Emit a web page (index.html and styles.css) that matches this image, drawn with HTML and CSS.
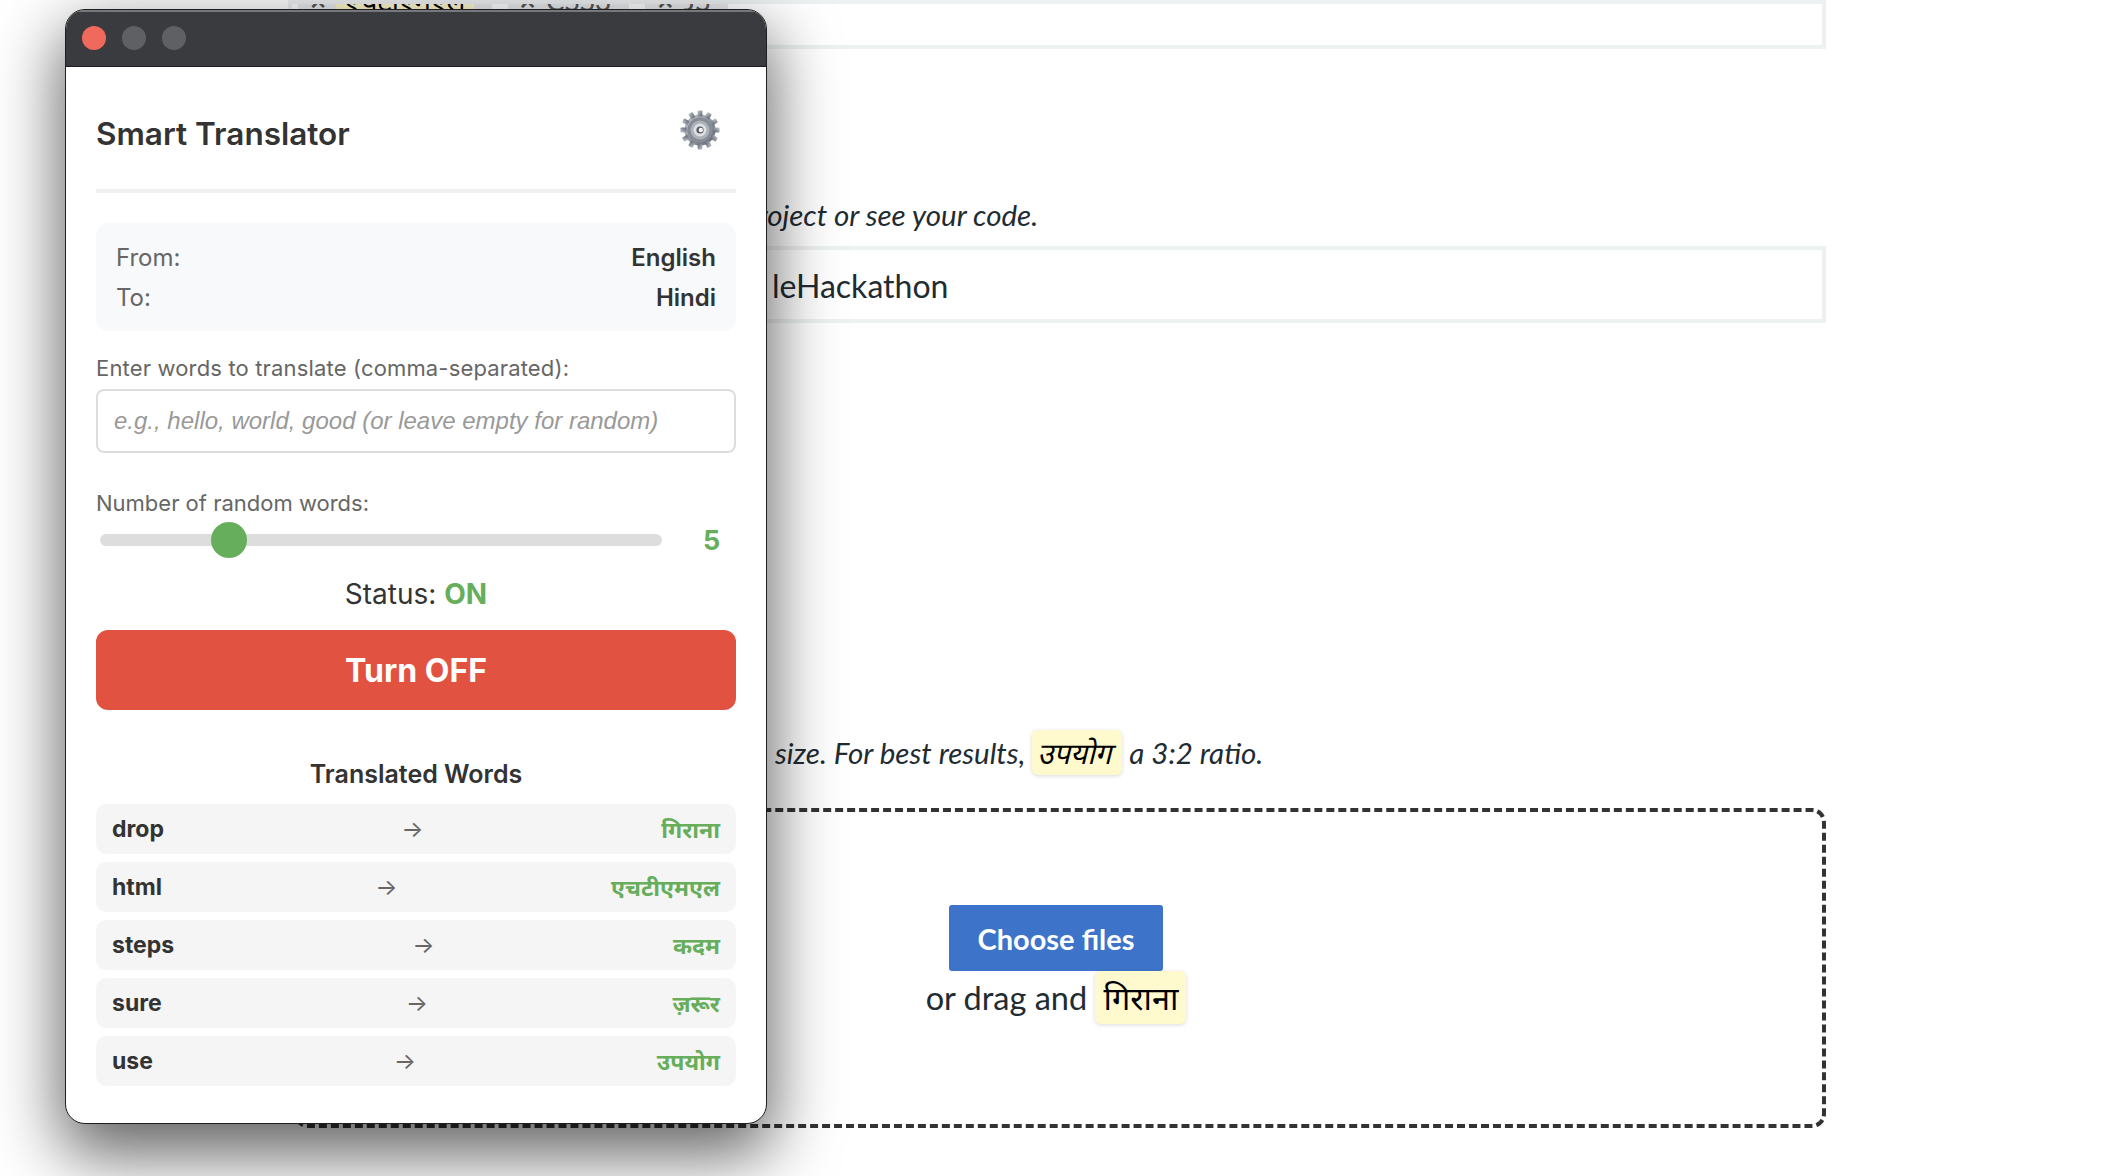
FILE: index.html
```html
<!DOCTYPE html>
<html lang="en">
<head>
	<meta charset="UTF-8">
	<link rel="stylesheet" href="styles.css">
	<title>Smart Translator</title>
</head>
<body>
<div class="page">
	<div class="box tagBox">
		<span class="tag"><i>×</i><mark class="hl">एचटीएमएल</mark></span>
		<span class="tag"><i>×</i>CSS3</span>
		<span class="tag"><i>×</i>JS</span>
	</div>
	<p class="hint linkHint">project or see your code.</p>
	<div class="box linkBox">leHackathon</div>
	<p class="hint sizeHint">size. For best results, <mark class="hl"><span class="slant">उपयोग</span></mark> a 3:2 ratio.</p>
	<div class="drop">
		<button class="choose">Choose files</button>
		<div class="dragText">or drag and <mark class="hl">गिराना</mark></div>
	</div>
</div>

<div class="win">
	<div class="titlebar">
		<span class="dot red"></span>
		<span class="dot"></span>
		<span class="dot"></span>
	</div>
	<div class="content">
		<div class="head">
			<h1>Smart Translator</h1>
			<svg class="gear" width="44" height="44" viewBox="0 0 44 44">
				<defs>
					<linearGradient id="steel" x1="0" y1="0" x2="1" y2="1">
						<stop offset="0" stop-color="#c3c8cf"/>
						<stop offset="0.55" stop-color="#8b919b"/>
						<stop offset="1" stop-color="#5f646d"/>
					</linearGradient>
				</defs>
				<g fill="url(#steel)">
					<circle cx="22" cy="22" r="15.5"/>
					<rect x="19.6" y="2.5" width="4.8" height="6" rx="1" transform="rotate(0 22 22)"/>
					<rect x="19.6" y="2.5" width="4.8" height="6" rx="1" transform="rotate(30 22 22)"/>
					<rect x="19.6" y="2.5" width="4.8" height="6" rx="1" transform="rotate(60 22 22)"/>
					<rect x="19.6" y="2.5" width="4.8" height="6" rx="1" transform="rotate(90 22 22)"/>
					<rect x="19.6" y="2.5" width="4.8" height="6" rx="1" transform="rotate(120 22 22)"/>
					<rect x="19.6" y="2.5" width="4.8" height="6" rx="1" transform="rotate(150 22 22)"/>
					<rect x="19.6" y="2.5" width="4.8" height="6" rx="1" transform="rotate(180 22 22)"/>
					<rect x="19.6" y="2.5" width="4.8" height="6" rx="1" transform="rotate(210 22 22)"/>
					<rect x="19.6" y="2.5" width="4.8" height="6" rx="1" transform="rotate(240 22 22)"/>
					<rect x="19.6" y="2.5" width="4.8" height="6" rx="1" transform="rotate(270 22 22)"/>
					<rect x="19.6" y="2.5" width="4.8" height="6" rx="1" transform="rotate(300 22 22)"/>
					<rect x="19.6" y="2.5" width="4.8" height="6" rx="1" transform="rotate(330 22 22)"/>
				</g>
				<circle cx="22" cy="22" r="12.5" fill="#868b95"/>
				<circle cx="22" cy="22" r="9.5" fill="#adb2b9"/>
				<circle cx="22" cy="22" r="6.5" fill="#dcdfe3"/>
				<circle cx="22" cy="22" r="3.6" fill="#565962"/>
				<circle cx="22.8" cy="22" r="2.2" fill="#f4f4f4"/>
			</svg>
		</div>
		<div class="info">
			<div class="infoRow"><span>From:</span><b>English</b></div>
			<div class="infoRow"><span>To:</span><b>Hindi</b></div>
		</div>
		<label class="lbl wordsLbl">Enter words to translate (comma-separated):</label>
		<input class="words" type="text" placeholder="e.g., hello, world, good (or leave empty for random)">
		<label class="lbl randomLbl">Number of random words:</label>
		<div class="sliderRow">
			<div class="track"><span class="thumb"></span></div>
			<span class="count">5</span>
		</div>
		<div class="status">Status: <b>ON</b></div>
		<button class="toggle">Turn OFF</button>
		<h2>Translated Words</h2>
		<ul class="list">
			<li><b>drop</b><span class="arrow">→</span><em>गिराना</em></li>
			<li><b>html</b><span class="arrow">→</span><em>एचटीएमएल</em></li>
			<li><b>steps</b><span class="arrow">→</span><em>कदम</em></li>
			<li><b>sure</b><span class="arrow">→</span><em>ज़रूर</em></li>
			<li><b>use</b><span class="arrow">→</span><em>उपयोग</em></li>
		</ul>
	</div>
</div>
</body>
</html>
```

FILE: styles.css
```css
*{
	box-sizing: border-box;
}
html,body{
	margin: 0;
	height: 100%;
	overflow: hidden;
}
body{
	position: relative;
	background: #fff;
	font-family: "Inter", "Noto Sans", "Noto Sans CJK SC", sans-serif;
}
mark{
	color: #000;
}
/* page behind the popup */
.page{
	margin-left: 288px;
	width: 1538px;
	color: #212b32;
	font-family: "Lato", "Noto Sans", sans-serif;
}
.box{
	border: 4px solid #eef1f2;
}
.tagBox{
	display: flex;
	height: 49px;
	padding-left: 6px;
	gap: 16px;
	overflow: hidden;
}
.tag{
	display: flex;
	align-items: flex-end;
	gap: 10px;
	height: 36px;
	margin-top: -26px;
	padding: 0 18px 0 12px;
	background: #e9ebee;
	font-size: 28px;
	line-height: 1;
	color: #555;
}
.tag i{
	font-style: normal;
	font-weight: 700;
}
.tag .hl{
	padding: 0 8px;
	border-radius: 0;
	box-shadow: none;
}
.hl{
	display: inline-block;
	padding: 4px 8px;
	background: #fffacd;
	border-radius: 6px;
	box-shadow: 0 1px 4px rgba(0,0,0,.15);
}
.slant{
	display: inline-block;
	transform: skewX(-14deg);
}
.hint{
	margin: 0;
	font-size: 29.5px;
	font-style: italic;
}
.hint .hl{
	padding: 2px 8px;
}
.linkHint{
	margin-top: 151px;
	padding-left: 454px;
	height: 46px;
	line-height: 30px;
}
.linkBox{
	height: 77px;
	padding-left: 480px;
	font-size: 32px;
	line-height: 72px;
}
.sizeHint{
	margin-top: 407px;
	padding-left: 487px;
	height: 78px;
}
.drop{
	display: flex;
	flex-direction: column;
	align-items: center;
	margin-left: 6px;
	height: 320px;
	padding-top: 93px;
	border: 4px dashed #333;
	border-radius: 14px;
}
.choose{
	margin-left: -8px;
	width: 214px;
	height: 66px;
	background: #3d74c9;
	border: 0;
	border-radius: 3px;
	color: #fff;
	font-family: inherit;
	font-size: 29px;
	font-weight: 700;
}
.dragText{
	margin-left: -8px;
	font-size: 32.5px;
}
/* popup window */
.win{
	position: absolute;
	left: 65px;
	top: 9px;
	width: 702px;
	height: 1115px;
	background: #fff;
	border: 1px solid #1f1f21;
	border-radius: 20px;
	box-shadow: 0 26px 66px 4px rgba(0,0,0,.62);
	overflow: hidden;
}
.titlebar{
	display: flex;
	align-items: center;
	gap: 16px;
	height: 57px;
	padding: 0 0 3px 16px;
	background: #3a3b3f;
	border-top: 2px solid #77787b;
	border-bottom: 1px solid #1f1f21;
}
.dot{
	width: 24px;
	height: 24px;
	border-radius: 50%;
	background: #5f6064;
}
.dot.red{
	background: #f0695d;
}
.content{
	padding: 0 30px;
}
.head{
	display: flex;
	align-items: center;
	justify-content: space-between;
	height: 126px;
	padding-top: 10px;
	padding-right: 14px;
	border-bottom: 4px solid #f0f0f0;
}
.head h1{
	margin: 0;
	font-size: 31.5px;
	font-weight: 600;
	color: #333;
}
.gear{
	margin-bottom: 6px;
}
.info{
	margin-top: 30px;
	height: 108px;
	padding: 15px 20px;
	background: #f8f9fa;
	border-radius: 13px;
	font-size: 24px;
}
.infoRow{
	display: flex;
	justify-content: space-between;
	height: 40px;
	line-height: 40px;
	color: #666;
}
.infoRow b{
	font-weight: 600;
	color: #333;
}
.lbl{
	display: block;
	margin-top: 25px;
	height: 33px;
	line-height: 24px;
	font-size: 22px;
	color: #666;
}
.wordsLbl{
	letter-spacing: .16px;
}
.words{
	display: block;
	width: 100%;
	height: 64px;
	padding: 0 16px;
	border: 2px solid #ddd;
	border-radius: 8px;
	font-family: "Liberation Sans", sans-serif;
	font-size: 24px;
}
.words::placeholder{
	color: #999;
	font-style: italic;
}
.randomLbl{
	margin-top: 38px;
	height: 31px;
}
.sliderRow{
	display: flex;
	align-items: center;
	gap: 41px;
	height: 36px;
	padding-left: 4px;
}
.track{
	position: relative;
	width: 562px;
	height: 12px;
	background: #ddd;
	border-radius: 6px;
}
.thumb{
	position: absolute;
	left: 111px;
	top: -12px;
	width: 36px;
	height: 36px;
	border-radius: 50%;
	background: #67ae5c;
}
.count{
	font-size: 27px;
	font-weight: 700;
	color: #67ae5c;
}
.status{
	margin-top: 16px;
	height: 40px;
	line-height: 40px;
	font-size: 28px;
	text-align: center;
	color: #333;
}
.status b{
	font-weight: 700;
	color: #67ae5c;
}
.toggle{
	display: block;
	margin-top: 16px;
	width: 100%;
	height: 80px;
	background: #e25241;
	border: 0;
	border-radius: 12px;
	color: #fff;
	font-family: inherit;
	font-size: 32px;
	font-weight: 700;
}
.content h2{
	margin: 46px 0 12px;
	height: 36px;
	line-height: 36px;
	font-size: 25px;
	font-weight: 600;
	text-align: center;
	color: #333;
}
.list{
	display: flex;
	flex-direction: column;
	gap: 8px;
	margin: 0;
	padding: 0;
	list-style: none;
}
.list li{
	display: flex;
	align-items: center;
	justify-content: space-between;
	height: 50px;
	padding: 0 16px;
	background: #f5f5f5;
	border-radius: 10px;
	font-size: 23px;
}
.list b{
	font-weight: 700;
	color: #333;
}
.arrow{
	color: #666;
}
.list em{
	font-style: normal;
	font-weight: 700;
	color: #67ae5c;
}
```
